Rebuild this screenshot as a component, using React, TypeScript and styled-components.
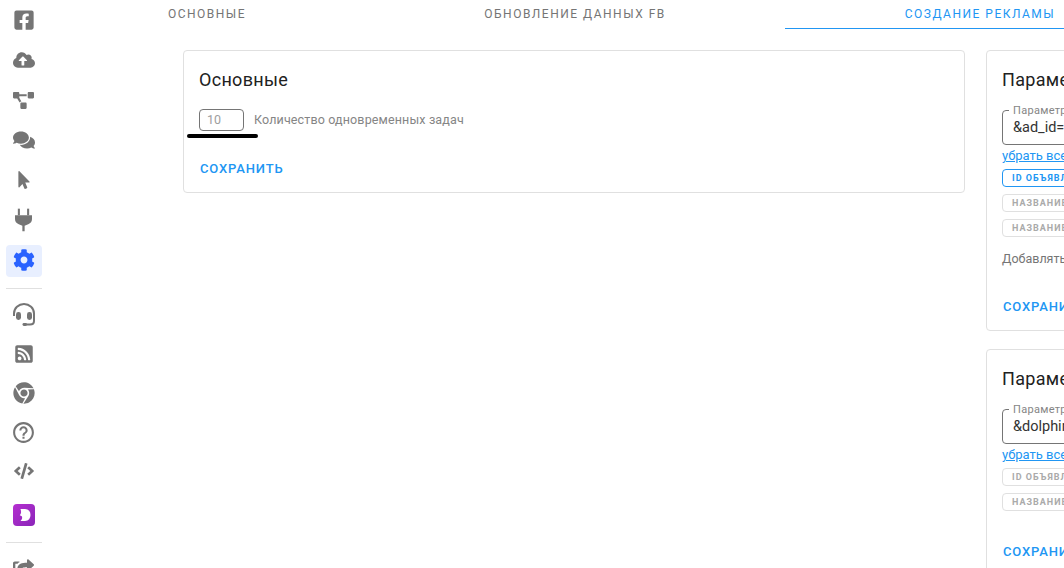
import React from 'react';
import styled, { createGlobalStyle } from 'styled-components';
import {
    FaFacebookSquare,
    FaCloudUploadAlt,
    FaProjectDiagram,
    FaComments,
    FaMousePointer,
    FaCog,
    FaRssSquare,
    FaChrome,
    FaCode,
    FaShareSquare,
} from 'react-icons/fa';
import { MdHelpOutline } from 'react-icons/md';

const GlobalStyle = createGlobalStyle`
    html, body {
        margin: 0;
        padding: 0;
        height: 100%;
        overflow: hidden;
        background: #fff;
        font-family: Roboto, 'Liberation Sans', sans-serif;
    }
`;

const PlugIcon = () => (
    <svg width="17" height="24" viewBox="0 0 18 24" fill="#757575">
        <rect x="3" y="0" width="2.2" height="7" />
        <rect x="12.8" y="0" width="2.2" height="7" />
        <path d="M0 7 H18 V11 Q18 15 14 16.5 L10.2 18 V24 H7.8 V18 L4 16.5 Q0 15 0 11 Z" />
    </svg>
);

const HeadsetIcon = () => (
    <svg width="24" height="24" viewBox="0 0 24 24" fill="none">
        <path d="M2 13 V10.5 A10 9.5 0 0 1 22 10.5 V18 Q22 21.5 18 21.5 H14" stroke="#757575" strokeWidth="2" />
        <rect x="4" y="9" width="5" height="8" rx="2.4" fill="#757575" />
        <rect x="15" y="9" width="5" height="8" rx="2.4" fill="#757575" />
        <rect x="10.5" y="20" width="4.5" height="3" rx="1.4" fill="#757575" />
    </svg>
);

const DolphinLogo = () => (
    <svg width="22" height="22" viewBox="0 0 22 22">
        <defs>
            <linearGradient id="dolphinFill" x1="0" y1="0" x2="1" y2="1">
                <stop offset="0" stopColor="#b52fd0" />
                <stop offset="1" stopColor="#8a25b8" />
            </linearGradient>
        </defs>
        <rect width="22" height="22" rx="4" fill="url(#dolphinFill)" />
        <path d="M7.5 5 H12 Q17.5 5.5 17.5 11 Q17.5 16.5 12 17 H7.5 Q10 14.5 8.8 12.2 L6.8 11.2 Q9 9 7.5 5 Z" fill="#fff" />
    </svg>
);

const topIcons = [
    { name: 'fb', size: 22, icon: <FaFacebookSquare /> },
    { name: 'upload', size: 22, icon: <FaCloudUploadAlt /> },
    { name: 'tree', size: 21, icon: <FaProjectDiagram /> },
    { name: 'comments', size: 22, icon: <FaComments /> },
    { name: 'pointer', size: 18, icon: <FaMousePointer /> },
    { name: 'plug', size: 21, icon: <PlugIcon /> },
];

const bottomIcons = [
    { name: 'headset', size: 21, icon: <HeadsetIcon /> },
    { name: 'rss', size: 20, icon: <FaRssSquare /> },
    { name: 'chrome', size: 22, icon: <FaChrome /> },
    { name: 'help', size: 25, icon: <MdHelpOutline /> },
    { name: 'code', size: 20, icon: <FaCode /> },
];

const App = () => (
    <Page>
        <GlobalStyle />
        <Sidebar>
            {topIcons.map(item => (
                <NavItem key={item.name} $size={item.size} $height={40}>
                    {item.icon}
                </NavItem>
            ))}
            <NavItem $size={22} $height={42}>
                <ActiveBox>
                    <FaCog />
                </ActiveBox>
            </NavItem>
            <Divider />
            {bottomIcons.map(item => (
                <NavItem key={item.name} $size={item.size} $height={39.2}>
                    {item.icon}
                </NavItem>
            ))}
            <LogoItem>
                <DolphinLogo />
            </LogoItem>
            <Divider />
            <NavItem $size={21} $height={40}>
                <FaShareSquare />
            </NavItem>
        </Sidebar>
        <Main>
            <Tabs>
                <Tab $width={316}>Основные</Tab>
                <Tab $width={420}>Обновление данных FB</Tab>
                <Tab $width={390} $active>
                    Создание рекламы
                </Tab>
            </Tabs>
            <Content>
                <Card>
                    <CardTitle>Основные</CardTitle>
                    <InlineRow>
                        <SmallInput>10</SmallInput>
                        <InlineLabel>Количество одновременных задач</InlineLabel>
                        <Scribble />
                    </InlineRow>
                    <SaveButton $top={30}>Сохранить</SaveButton>
                </Card>
                <RightColumn>
                    <Card>
                        <CardTitle>Параметры ссылки</CardTitle>
                        <Field>
                            <FieldLabel>Параметр ссылки</FieldLabel>
                            &amp;ad_id=&#123;&#123;ad.id&#125;&#125;
                        </Field>
                        <ClearLink>убрать все</ClearLink>
                        <Chips>
                            <Chip $selected>ID объявления</Chip>
                            <Chip>Название объявления</Chip>
                            <Chip>Название кампании</Chip>
                        </Chips>
                        <Hint>Добавлять параметры к ссылке</Hint>
                        <SaveButton $top={33}>Сохранить</SaveButton>
                    </Card>
                    <Card>
                        <CardTitle>Параметры Dolphin</CardTitle>
                        <Field>
                            <FieldLabel>Параметр ссылки</FieldLabel>
                            &amp;dolphin=&#123;&#123;ad.id&#125;&#125;
                        </Field>
                        <ClearLink>убрать все</ClearLink>
                        <Chips>
                            <Chip>ID объявления</Chip>
                            <Chip>Название объявления</Chip>
                        </Chips>
                        <SaveButton $top={33}>Сохранить</SaveButton>
                    </Card>
                </RightColumn>
            </Content>
        </Main>
    </Page>
);

const Page = styled.div`
    display: flex;
    width: 1064px;
    height: 568px;
    overflow: hidden;
`;

const Sidebar = styled.nav`
    flex: 0 0 49px;
    display: flex;
    flex-direction: column;
    align-items: stretch;
    padding-left: 6px;
    box-sizing: border-box;
    color: #757575;
`;

const NavItem = styled.div<{ $size: number; $height: number }>`
    flex: 0 0 ${props => props.$height}px;
    width: 35px;
    padding-right: 1px;
    display: flex;
    align-items: center;
    justify-content: center;
    font-size: ${props => props.$size}px;
`;

const ActiveBox = styled.div`
    flex: 0 0 36px;
    height: 32px;
    box-sizing: border-box;
    padding-bottom: 2px;
    margin-right: -1px;
    display: flex;
    align-items: center;
    justify-content: center;
    border-radius: 4px;
    background: #e8efff;
    color: #2962ff;
`;

const LogoItem = styled.div`
    flex: 0 0 42px;
    width: 36px;
    margin-top: 3px;
    display: flex;
    align-items: center;
    justify-content: center;
`;

const Divider = styled.div`
    flex: 0 0 1px;
    width: 36px;
    margin: 6px 0;
    background: #e0e0e0;
`;

const Main = styled.main`
    flex: 0 0 1126px;
    display: flex;
    flex-direction: column;
`;

const Tabs = styled.div`
    display: flex;
    height: 29px;
`;

const Tab = styled.div<{ $width: number; $active?: boolean }>`
    flex: 0 0 ${props => props.$width}px;
    height: 29px;
    box-sizing: border-box;
    padding-top: 7px;
    text-align: center;
    font-size: 12px;
    line-height: 15px;
    font-weight: 400;
    letter-spacing: 1.5px;
    text-transform: uppercase;
    color: ${props => (props.$active ? '#2196f3' : '#757575')};
    border-bottom: 1px solid ${props => (props.$active ? '#2196f3' : 'transparent')};
`;

const Content = styled.div`
    display: flex;
    align-items: flex-start;
    gap: 21px;
    padding: 21px 0 0 134px;
`;

const Card = styled.section`
    box-sizing: border-box;
    width: 782px;
    padding: 18px 15px 15px;
    border: 1px solid #e0e0e0;
    border-radius: 4px;
    background: #fff;
`;

const RightColumn = styled.div`
    display: flex;
    flex-direction: column;
    gap: 18px;
`;

const CardTitle = styled.h2`
    margin: 0;
    font-size: 18px;
    line-height: 21px;
    font-weight: 400;
    letter-spacing: 0.3px;
    color: #212121;
    white-space: nowrap;
`;

const InlineRow = styled.div`
    position: relative;
    display: flex;
    align-items: center;
    gap: 10px;
    margin-top: 19px;
`;

const SmallInput = styled.div`
    box-sizing: border-box;
    width: 45px;
    height: 22px;
    padding-left: 7px;
    border: 1px solid #757575;
    border-radius: 4px;
    font-size: 12.5px;
    line-height: 20px;
    color: #9e9e9e;
`;

const InlineLabel = styled.span`
    margin-top: -1px;
    font-size: 12.5px;
    letter-spacing: 0.14px;
    color: #858585;
`;

const Scribble = styled.div`
    position: absolute;
    left: -12px;
    top: 25px;
    width: 71px;
    height: 4px;
    border-radius: 2px;
    background: #000;
`;

const SaveButton = styled.button<{ $top: number }>`
    display: block;
    margin: ${props => props.$top}px 0 0;
    padding: 0 0 0 1px;
    border: 0;
    background: none;
    font-family: inherit;
    font-size: 13px;
    line-height: 16px;
    font-weight: 500;
    letter-spacing: 0.85px;
    text-transform: uppercase;
    color: #2196f3;
`;

const Field = styled.div`
    position: relative;
    box-sizing: border-box;
    width: 350px;
    height: 35px;
    margin-top: 20px;
    padding: 8px 0 0 10px;
    border: 1px solid #757575;
    border-radius: 4px;
    font-size: 14.5px;
    line-height: 17px;
    color: #333;
    white-space: nowrap;
`;

const FieldLabel = styled.span`
    position: absolute;
    left: 6px;
    top: -6px;
    padding: 0 4px;
    background: #fff;
    font-size: 11px;
    letter-spacing: 0.3px;
    line-height: 11px;
    color: #858585;
`;

const ClearLink = styled.a`
    display: block;
    margin-top: 3px;
    font-size: 13px;
    line-height: 15px;
    color: #2196f3;
    text-decoration: underline;
`;

const Chips = styled.div`
    display: flex;
    flex-direction: column;
    align-items: flex-start;
    gap: 7px;
    margin-top: 6px;
`;

const Chip = styled.div<{ $selected?: boolean }>`
    box-sizing: border-box;
    height: 18px;
    padding: 0 9px;
    border: 1px solid ${props => (props.$selected ? '#2196f3' : '#e0e0e0')};
    border-radius: 4px;
    font-size: 9px;
    line-height: 16px;
    font-weight: 700;
    letter-spacing: 1px;
    text-transform: uppercase;
    white-space: nowrap;
    color: ${props => (props.$selected ? '#2196f3' : '#aaaaaa')};
`;

const Hint = styled.div`
    margin-top: 14px;
    font-size: 12.5px;
    line-height: 15px;
    color: #757575;
    white-space: nowrap;
`;

export default App;
